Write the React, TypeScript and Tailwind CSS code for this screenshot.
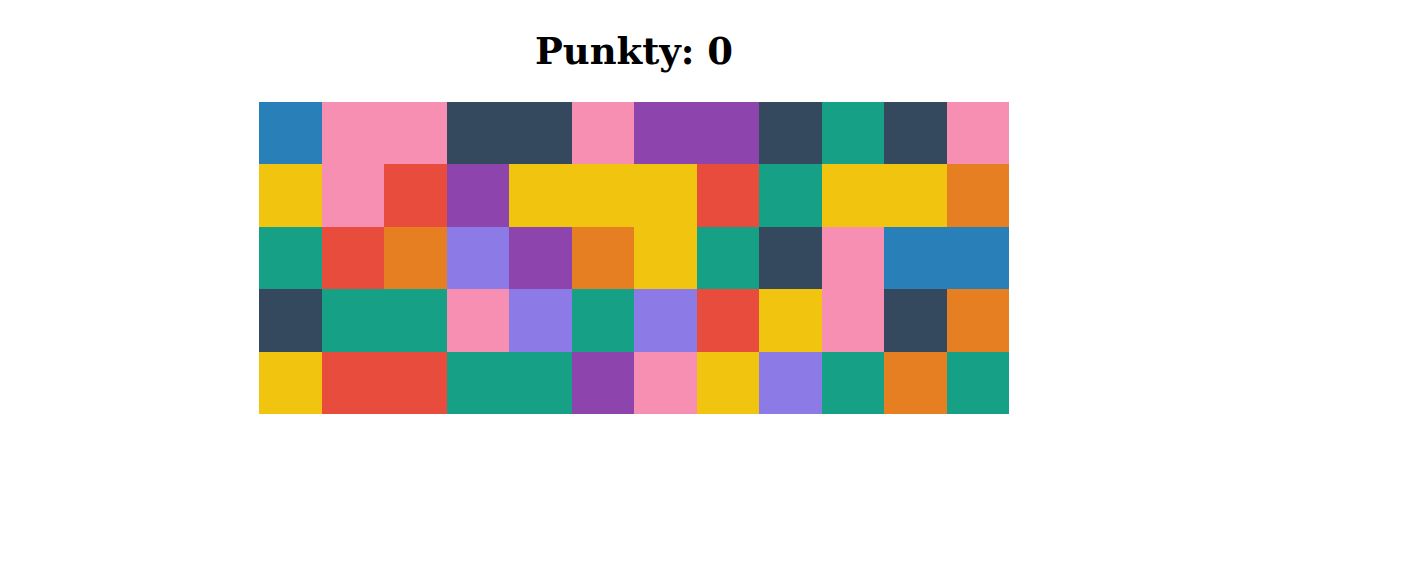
const C: Record<string, string> = {
  b: 'bg-[#2980b9]',
  p: 'bg-[#f78fb3]',
  d: 'bg-[#34495e]',
  v: 'bg-[#8e44ad]',
  t: 'bg-[#16a085]',
  y: 'bg-[#f1c40f]',
  r: 'bg-[#e74c3c]',
  o: 'bg-[#e67e22]',
  l: 'bg-[#8c7ae6]',
};

const board = [
  'bppddpvvdtdp',
  'yprvyyyrtyyo',
  'trolvoytdpbb',
  'dttpltlrypdo',
  'yrrttvpyltot',
];

export default function App() {
  return (
    <div className="min-h-screen bg-white pl-[259px] pt-[33px]">
      <div className="w-[750px] flex flex-col items-center">
        <h1 className="text-[37px] leading-none font-bold text-black font-['DejaVu_Serif',serif]">
          Punkty: 0
        </h1>
        <div className="mt-[32px] grid grid-cols-[repeat(12,62.5px)] auto-rows-[62.4px]">
          {board.flatMap((row, i) =>
            row.split('').map((c, j) => <div key={`${i}-${j}`} className={C[c]} />)
          )}
        </div>
      </div>
    </div>
  );
}
